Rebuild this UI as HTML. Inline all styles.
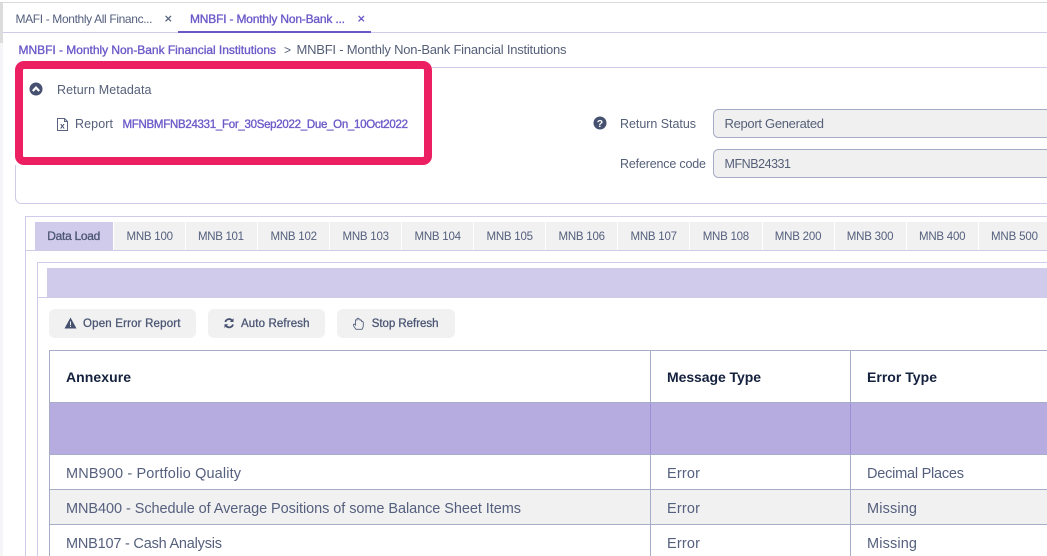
<!DOCTYPE html>
<html><head><meta charset="utf-8"><style>
html,body{margin:0;padding:0;background:#fff;width:1047px;height:556px;overflow:hidden}
svg{display:block}
text{font-family:"Liberation Sans",sans-serif;font-size:13px;fill:#555f78}
.t{font-size:11.5px;fill:#55607e}
.p{fill:#6b5ac8;stroke:#6b5ac8;stroke-width:.35}
.b{font-size:12px;fill:#4c5674;stroke:#4c5674;stroke-width:.3}
.h{font-size:14px;font-weight:bold;fill:#14213d}
.r{font-size:14.5px;fill:#55607e}
</style></head><body>
<svg width="1047" height="556" viewBox="0 0 1047 556" xmlns="http://www.w3.org/2000/svg">
<rect width="1047" height="556" fill="#fff"/>
<rect x="0" y="2" width="1047" height="1" fill="#d9d9d9"/>
<rect x="0" y="3" width="3" height="553" fill="#f5f5f7"/>
<rect x="0" y="3" width="3" height="40" fill="#dcdcdc"/>
<rect x="3" y="32" width="1044" height="1" fill="#d0cbea"/>
<rect x="178" y="31" width="193" height="2" fill="#6a58c6"/>
<text class="t" x="15.5" y="23" textLength="137" style="font-size:12px">MAFI - Monthly All Financ...</text>
<text x="164.5" y="23" style="font-size:13px;fill:#55607e;stroke:#55607e;stroke-width:.3">×</text>
<text class="t p" x="190" y="23" textLength="155" style="font-size:12px">MNBFI - Monthly Non-Bank ...</text>
<text class="t p" x="357.5" y="23" style="font-size:13px">×</text>
<text class="p" x="18.5" y="54" textLength="257.5" style="font-size:12px">MNBFI - Monthly Non-Bank Financial Institutions</text>
<text x="284" y="54" style="font-size:12px">&gt;</text>
<text x="296.5" y="54" textLength="270">MNBFI - Monthly Non-Bank Financial Institutions</text>

<path d="M432 67.5H1047M15.5 165V197a6 6 0 0 0 6 6.5H1047" fill="none" stroke="#d0cbea"/>
<rect x="19" y="65" width="409" height="96" rx="5" fill="#fff" stroke="#ec1f63" stroke-width="8"/>

<circle cx="36" cy="89" r="6.5" fill="#46506f"/>
<path d="M32.8 91L36 87.6L39.2 91" fill="none" stroke="#fff" stroke-width="2.2"/>
<text x="57" y="94" textLength="94.5" style="font-size:12.5px">Return Metadata</text>
<path d="M57.5 118.5H64.5L67.5 121.5V130.5H57.5Z M64.5 118.5V121.5H67.5" fill="none" stroke="#5a6480" stroke-width="1"/>
<text x="60" y="128.5" style="font-size:8.5px;font-weight:bold;fill:#46506f">x</text>
<text x="75" y="128" textLength="38" style="font-size:12.5px">Report</text>
<text class="p" x="122.5" y="128" textLength="285.5" style="font-size:11.5px">MFNBMFNB24331_For_30Sep2022_Due_On_10Oct2022</text>

<circle cx="600" cy="123" r="6.5" fill="#46506f"/>
<text x="596.7" y="127" style="font-size:10.5px;font-weight:bold;fill:#fff">?</text>
<text x="620" y="128" textLength="76" style="font-size:12.5px">Return Status</text>
<text x="620" y="168" textLength="86" style="font-size:12.5px">Reference code</text>
<rect x="713.5" y="109.5" width="400" height="28" rx="5" fill="#f0f0f0" stroke="#a5adc6"/>
<rect x="713.5" y="149.5" width="400" height="28" rx="5" fill="#f0f0f0" stroke="#a5adc6"/>
<text x="724.5" y="128" textLength="99.5">Report Generated</text>
<text x="724.5" y="168" textLength="66.5" style="font-size:12.5px">MFNB24331</text>

<path d="M1047 216.5H25.5V556" fill="none" stroke="#d0cbea"/>
<path d="M26 250.5H1047" fill="none" stroke="#d0cbea"/>
<path d="M1047 262.5H37.5V556" fill="none" stroke="#d0cbea"/>
<rect x="35" y="222" width="78" height="28" fill="#d0cbea"/>
<g fill="#f1f1f1">
<rect x="114" y="222" width="71" height="28"/><rect x="186" y="222" width="71" height="28"/><rect x="258" y="222" width="71" height="28"/><rect x="330" y="222" width="71" height="28"/><rect x="402" y="222" width="71" height="28"/><rect x="474" y="222" width="71" height="28"/><rect x="546" y="222" width="71" height="28"/><rect x="618" y="222" width="71" height="28"/><rect x="690" y="222" width="72" height="28"/><rect x="763" y="222" width="71" height="28"/><rect x="835" y="222" width="71" height="28"/><rect x="907" y="222" width="71" height="28"/><rect x="979" y="222" width="68" height="28"/>
</g>
<text class="b" x="47.3" y="240" textLength="53">Data Load</text>
<text class="t" x="126.5" y="240" textLength="46.5">MNB 100</text>
<text class="t" x="198" y="240" textLength="46">MNB 101</text>
<text class="t" x="270.5" y="240" textLength="46.5">MNB 102</text>
<text class="t" x="342.5" y="240" textLength="46.5">MNB 103</text>
<text class="t" x="414.5" y="240" textLength="46.5">MNB 104</text>
<text class="t" x="486.5" y="240" textLength="46.5">MNB 105</text>
<text class="t" x="558.5" y="240" textLength="46.5">MNB 106</text>
<text class="t" x="630.5" y="240" textLength="46.5">MNB 107</text>
<text class="t" x="702.7" y="240" textLength="46.5">MNB 108</text>
<text class="t" x="774.7" y="240" textLength="46.8">MNB 200</text>
<text class="t" x="846.7" y="240" textLength="46.8">MNB 300</text>
<text class="t" x="919" y="240" textLength="46.5">MNB 400</text>
<text class="t" x="991" y="240" textLength="47">MNB 500</text>

<rect x="47" y="268" width="1000" height="29" fill="#d0cbea"/>
<rect x="38" y="297" width="1009" height="1" fill="#d0cbea"/>

<rect x="49" y="309" width="147" height="29" rx="6" fill="#f1f1f1"/>
<rect x="208" y="309" width="117" height="29" rx="6" fill="#f1f1f1"/>
<rect x="337" y="309" width="118" height="29" rx="6" fill="#f1f1f1"/>
<path d="M70.5 317.5L76.5 328.5H64.5Z" fill="#46506f"/>
<rect x="70" y="321.5" width="1" height="3.5" fill="#f1f1f1"/><rect x="70" y="325.7" width="1" height="1.2" fill="#f1f1f1"/>
<text class="b" x="83" y="327" textLength="97.5" style="font-size:11.5px">Open Error Report</text>
<path d="M225.3 322A4 4 0 0 1 232 320.3M233 324.5A4 4 0 0 1 226.2 326" fill="none" stroke="#46506f" stroke-width="1.8"/>
<path d="M233.5 318.3V322H229.8Z M224.5 328V324.3H228.2Z" fill="#46506f"/>
<text class="b" x="241" y="327" textLength="68.5" style="font-size:11.5px">Auto Refresh</text>
<path d="M356 329.3C354.5 327.5 353 325.5 353.5 324.5C354 323.6 355 324.3 355.5 325V320.5C355.5 319.5 357 319.5 357 320.5V319C357 318 358.5 318 358.5 319V319.5C358.5 318.7 360 318.7 360 319.8V320.5C360.2 319.7 361.7 319.8 361.7 321V322C362 321.2 363.3 321.4 363.3 322.5V325.5C363.3 327.5 362.5 328.5 362 329.3Z" fill="none" stroke="#55607e" stroke-width=".9"/>
<text class="b" x="371.7" y="327" textLength="66.8" style="font-size:11.5px">Stop Refresh</text>

<rect x="49.5" y="402.5" width="998" height="52" fill="#b6acdf"/>
<rect x="49.5" y="489.5" width="998" height="35" fill="#f1f1f1"/>
<path d="M1047 350.5H49.5V556M49.5 402.5H1047M49.5 454.5H1047M49.5 489.5H1047M49.5 524.5H1047M650.5 350.5V556M850.5 350.5V556" fill="none" stroke="#a5adc9"/>
<path d="M650.5 403V454M850.5 403V454" fill="none" stroke="#9a90d8"/>
<text class="h" x="66" y="382" textLength="65">Annexure</text>
<text class="h" x="667" y="382" textLength="94">Message Type</text>
<text class="h" x="867" y="382" textLength="70">Error Type</text>
<text class="r" x="66" y="478" textLength="175">MNB900 - Portfolio Quality</text>
<text class="r" x="667" y="478" textLength="33">Error</text>
<text class="r" x="867" y="478" textLength="97">Decimal Places</text>
<text class="r" x="66" y="513" textLength="455">MNB400 - Schedule of Average Positions of some Balance Sheet Items</text>
<text class="r" x="667" y="513" textLength="33">Error</text>
<text class="r" x="867" y="513" textLength="50">Missing</text>
<text class="r" x="66" y="548" textLength="156">MNB107 - Cash Analysis</text>
<text class="r" x="667" y="548" textLength="33">Error</text>
<text class="r" x="867" y="548" textLength="50">Missing</text>
</svg>
</body></html>
